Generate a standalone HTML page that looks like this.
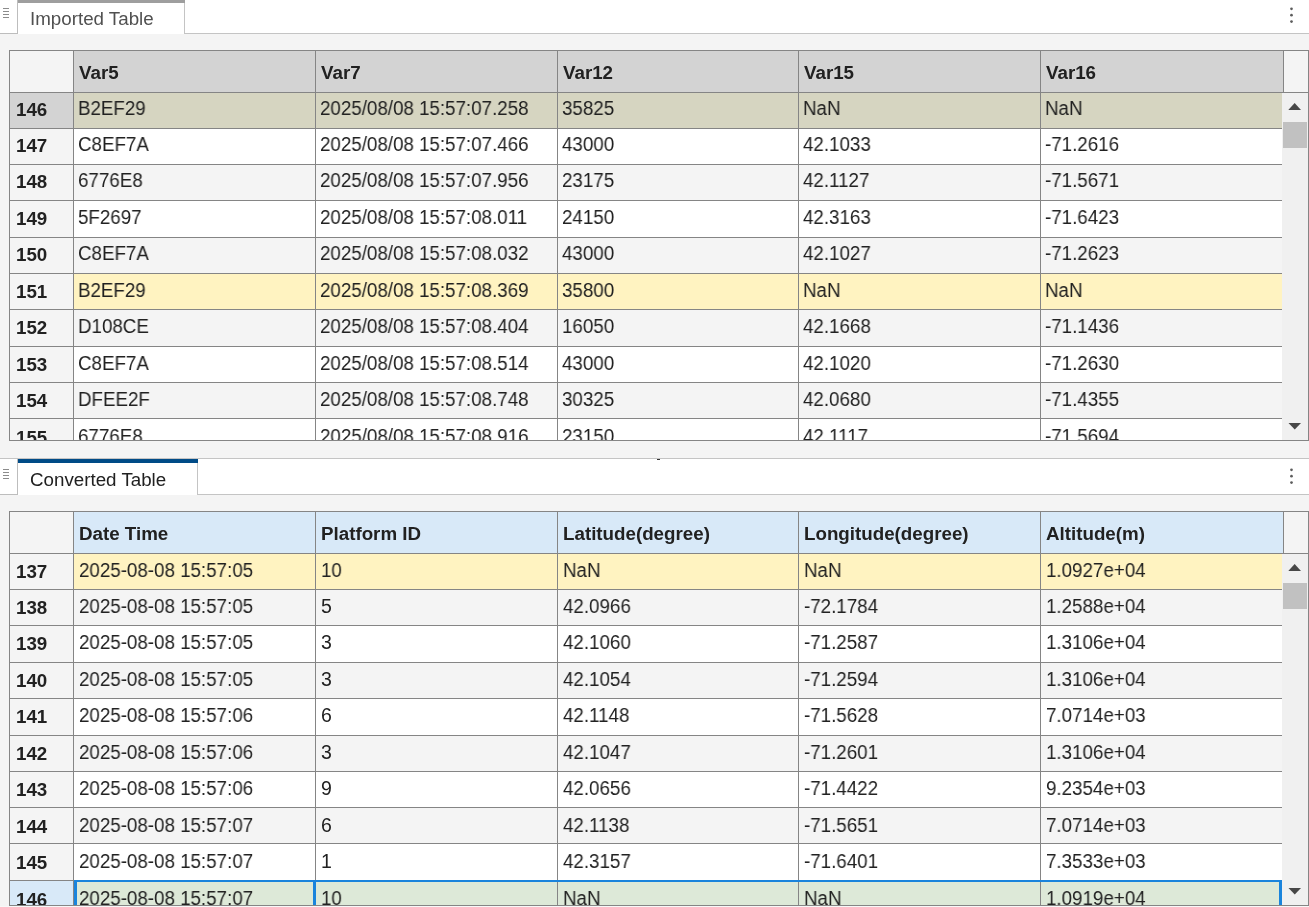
<!DOCTYPE html>
<html><head><meta charset="utf-8"><style>
html,body{margin:0;padding:0}
body{width:1309px;height:907px;overflow:hidden;position:relative;background:#f4f4f4;font-family:"Liberation Sans",sans-serif;font-size:18.75px;color:#212121}
body>div{position:absolute}
.t{position:absolute;line-height:21px;white-space:nowrap;will-change:transform}
.clip{overflow:hidden;will-change:transform}
.d{font-size:19.5px;transform:scaleX(0.9615);transform-origin:0 0}
.b{font-weight:bold}
.box{border:1px solid #858585;box-sizing:border-box;background:#f4f4f4}
.up{width:0;height:0;border-left:6.5px solid transparent;border-right:6.5px solid transparent;border-bottom:7px solid #474747}
.dn{width:0;height:0;border-left:6.5px solid transparent;border-right:6.5px solid transparent;border-top:7px solid #474747}
</style></head><body>
<div style="left:0px;top:-3px;width:1309px;height:37px;background:#fff;border-top:1px solid #c4c4c4;border-bottom:1px solid #c4c4c4;box-sizing:border-box"></div>
<div style="left:0px;top:-3px;width:18px;height:37px;background:#fff;border-top:1px solid #c4c4c4;border-right:1px solid #bdbdbd;border-bottom:1px solid #bdbdbd;box-sizing:border-box"></div>
<div style="left:3px;top:8px;width:6px;height:1px;background:#8c8c8c;"></div>
<div style="left:3px;top:11px;width:6px;height:1px;background:#8c8c8c;"></div>
<div style="left:3px;top:14px;width:6px;height:1px;background:#8c8c8c;"></div>
<div style="left:3px;top:17px;width:6px;height:1px;background:#8c8c8c;"></div>
<div style="left:18px;top:-2px;width:167px;height:36px;background:#fff;border-right:1px solid #c4c4c4;box-sizing:border-box"></div>
<div style="left:18px;top:-2px;width:167px;height:5px;background:#9e9e9e;"></div>
<div class="t " style="left:30.3px;top:8.00px;color:#505050">Imported Table</div>
<svg style="position:absolute;left:1285px;top:-3px" width="14" height="36"><g fill="#5c5c5c"><circle cx="6.5" cy="11.8" r="1.35"/><circle cx="6.5" cy="18.200000000000003" r="1.35"/><circle cx="6.5" cy="24.6" r="1.35"/></g></svg>
<div class="box" style="left:9px;top:50px;width:1300px;height:391px"></div>
<div style="left:10px;top:51px;width:63px;height:41px;background:#f4f4f4;"></div>
<div style="left:74px;top:51px;width:241px;height:41px;background:#d3d3d3;"></div>
<div style="left:316px;top:51px;width:241px;height:41px;background:#d3d3d3;"></div>
<div style="left:558px;top:51px;width:240px;height:41px;background:#d3d3d3;"></div>
<div style="left:799px;top:51px;width:241px;height:41px;background:#d3d3d3;"></div>
<div style="left:1041px;top:51px;width:242px;height:41px;background:#d3d3d3;"></div>
<div style="left:1284px;top:51px;width:24px;height:41px;background:#f4f4f4;"></div>
<div style="left:1282px;top:93px;width:26px;height:347px;background:#f0f0f0;"></div>
<div style="left:10px;top:93px;width:63px;height:35px;background:#d3d3d3;"></div>
<div style="left:74px;top:93px;width:1208px;height:35px;background:#d6d5c1;"></div>
<div style="left:10px;top:129px;width:63px;height:35px;background:#f4f4f4;"></div>
<div style="left:74px;top:129px;width:1208px;height:35px;background:#ffffff;"></div>
<div style="left:10px;top:165px;width:63px;height:35px;background:#f4f4f4;"></div>
<div style="left:74px;top:165px;width:1208px;height:35px;background:#f4f4f4;"></div>
<div style="left:10px;top:201px;width:63px;height:36px;background:#f4f4f4;"></div>
<div style="left:74px;top:201px;width:1208px;height:36px;background:#ffffff;"></div>
<div style="left:10px;top:238px;width:63px;height:35px;background:#f4f4f4;"></div>
<div style="left:74px;top:238px;width:1208px;height:35px;background:#f4f4f4;"></div>
<div style="left:10px;top:274px;width:63px;height:35px;background:#f4f4f4;"></div>
<div style="left:74px;top:274px;width:1208px;height:35px;background:#fff3c1;"></div>
<div style="left:10px;top:310px;width:63px;height:36px;background:#f4f4f4;"></div>
<div style="left:74px;top:310px;width:1208px;height:36px;background:#f4f4f4;"></div>
<div style="left:10px;top:347px;width:63px;height:35px;background:#f4f4f4;"></div>
<div style="left:74px;top:347px;width:1208px;height:35px;background:#ffffff;"></div>
<div style="left:10px;top:383px;width:63px;height:35px;background:#f4f4f4;"></div>
<div style="left:74px;top:383px;width:1208px;height:35px;background:#f4f4f4;"></div>
<div style="left:10px;top:419px;width:63px;height:21px;background:#f4f4f4;"></div>
<div style="left:74px;top:419px;width:1208px;height:21px;background:#ffffff;"></div>
<div style="left:10px;top:92px;width:1298px;height:1px;background:#858585;"></div>
<div style="left:10px;top:128px;width:1272px;height:1px;background:#858585;"></div>
<div style="left:10px;top:164px;width:1272px;height:1px;background:#858585;"></div>
<div style="left:10px;top:200px;width:1272px;height:1px;background:#858585;"></div>
<div style="left:10px;top:237px;width:1272px;height:1px;background:#858585;"></div>
<div style="left:10px;top:273px;width:1272px;height:1px;background:#858585;"></div>
<div style="left:10px;top:309px;width:1272px;height:1px;background:#858585;"></div>
<div style="left:10px;top:346px;width:1272px;height:1px;background:#858585;"></div>
<div style="left:10px;top:382px;width:1272px;height:1px;background:#858585;"></div>
<div style="left:10px;top:418px;width:1272px;height:1px;background:#858585;"></div>
<div style="left:73px;top:51px;width:1px;height:389px;background:#858585;"></div>
<div style="left:315px;top:51px;width:1px;height:389px;background:#858585;"></div>
<div style="left:557px;top:51px;width:1px;height:389px;background:#858585;"></div>
<div style="left:798px;top:51px;width:1px;height:389px;background:#858585;"></div>
<div style="left:1040px;top:51px;width:1px;height:389px;background:#858585;"></div>
<div style="left:1283px;top:51px;width:1px;height:42px;background:#858585;"></div>
<div class="t b" style="left:79.3px;top:62.00px">Var5</div>
<div class="t b" style="left:321.3px;top:62.00px">Var7</div>
<div class="t b" style="left:563.3px;top:62.00px">Var12</div>
<div class="t b" style="left:804.3px;top:62.00px">Var15</div>
<div class="t b" style="left:1046.3px;top:62.00px">Var16</div>
<div class="clip" style="left:0;top:93px;width:1282px;height:347px">
<div class="t b" style="left:16.3px;top:5.50px">146</div>
<div class="t d" style="left:78.1px;top:4.50px">B2EF29</div>
<div class="t d" style="left:320.1px;top:4.50px">2025/08/08 15:57:07.258</div>
<div class="t d" style="left:562.1px;top:4.50px">35825</div>
<div class="t d" style="left:803.1px;top:4.50px">NaN</div>
<div class="t d" style="left:1045.1px;top:4.50px">NaN</div>
<div class="t b" style="left:16.3px;top:41.97px">147</div>
<div class="t d" style="left:78.1px;top:40.97px">C8EF7A</div>
<div class="t d" style="left:320.1px;top:40.97px">2025/08/08 15:57:07.466</div>
<div class="t d" style="left:562.1px;top:40.97px">43000</div>
<div class="t d" style="left:803.1px;top:40.97px">42.1033</div>
<div class="t d" style="left:1045.1px;top:40.97px">-71.2616</div>
<div class="t b" style="left:16.3px;top:78.44px">148</div>
<div class="t d" style="left:78.1px;top:77.44px">6776E8</div>
<div class="t d" style="left:320.1px;top:77.44px">2025/08/08 15:57:07.956</div>
<div class="t d" style="left:562.1px;top:77.44px">23175</div>
<div class="t d" style="left:803.1px;top:77.44px">42.1127</div>
<div class="t d" style="left:1045.1px;top:77.44px">-71.5671</div>
<div class="t b" style="left:16.3px;top:114.91px">149</div>
<div class="t d" style="left:78.1px;top:113.91px">5F2697</div>
<div class="t d" style="left:320.1px;top:113.91px">2025/08/08 15:57:08.011</div>
<div class="t d" style="left:562.1px;top:113.91px">24150</div>
<div class="t d" style="left:803.1px;top:113.91px">42.3163</div>
<div class="t d" style="left:1045.1px;top:113.91px">-71.6423</div>
<div class="t b" style="left:16.3px;top:151.38px">150</div>
<div class="t d" style="left:78.1px;top:150.38px">C8EF7A</div>
<div class="t d" style="left:320.1px;top:150.38px">2025/08/08 15:57:08.032</div>
<div class="t d" style="left:562.1px;top:150.38px">43000</div>
<div class="t d" style="left:803.1px;top:150.38px">42.1027</div>
<div class="t d" style="left:1045.1px;top:150.38px">-71.2623</div>
<div class="t b" style="left:16.3px;top:187.85px">151</div>
<div class="t d" style="left:78.1px;top:186.85px">B2EF29</div>
<div class="t d" style="left:320.1px;top:186.85px">2025/08/08 15:57:08.369</div>
<div class="t d" style="left:562.1px;top:186.85px">35800</div>
<div class="t d" style="left:803.1px;top:186.85px">NaN</div>
<div class="t d" style="left:1045.1px;top:186.85px">NaN</div>
<div class="t b" style="left:16.3px;top:224.32px">152</div>
<div class="t d" style="left:78.1px;top:223.32px">D108CE</div>
<div class="t d" style="left:320.1px;top:223.32px">2025/08/08 15:57:08.404</div>
<div class="t d" style="left:562.1px;top:223.32px">16050</div>
<div class="t d" style="left:803.1px;top:223.32px">42.1668</div>
<div class="t d" style="left:1045.1px;top:223.32px">-71.1436</div>
<div class="t b" style="left:16.3px;top:260.79px">153</div>
<div class="t d" style="left:78.1px;top:259.79px">C8EF7A</div>
<div class="t d" style="left:320.1px;top:259.79px">2025/08/08 15:57:08.514</div>
<div class="t d" style="left:562.1px;top:259.79px">43000</div>
<div class="t d" style="left:803.1px;top:259.79px">42.1020</div>
<div class="t d" style="left:1045.1px;top:259.79px">-71.2630</div>
<div class="t b" style="left:16.3px;top:297.26px">154</div>
<div class="t d" style="left:78.1px;top:296.26px">DFEE2F</div>
<div class="t d" style="left:320.1px;top:296.26px">2025/08/08 15:57:08.748</div>
<div class="t d" style="left:562.1px;top:296.26px">30325</div>
<div class="t d" style="left:803.1px;top:296.26px">42.0680</div>
<div class="t d" style="left:1045.1px;top:296.26px">-71.4355</div>
<div class="t b" style="left:16.3px;top:333.73px">155</div>
<div class="t d" style="left:78.1px;top:332.73px">6776E8</div>
<div class="t d" style="left:320.1px;top:332.73px">2025/08/08 15:57:08.916</div>
<div class="t d" style="left:562.1px;top:332.73px">23150</div>
<div class="t d" style="left:803.1px;top:332.73px">42.1117</div>
<div class="t d" style="left:1045.1px;top:332.73px">-71.5694</div>
</div>
<svg style="position:absolute;left:1280px;top:92px" width="29" height="30"><polygon points="8.3,18 21,18 14.65,11" fill="#474747"/></svg>
<div style="left:1283px;top:122px;width:24px;height:26px;background:#c1c1c1;"></div>
<svg style="position:absolute;left:1280px;top:420px" width="29" height="20"><polygon points="8.5,3 21,3 14.75,9.5" fill="#474747"/></svg>
<div style="left:0px;top:458px;width:1309px;height:37px;background:#fff;border-top:1px solid #c4c4c4;border-bottom:1px solid #c4c4c4;box-sizing:border-box"></div>
<div style="left:0px;top:458px;width:18px;height:37px;background:#fff;border-top:1px solid #c4c4c4;border-right:1px solid #bdbdbd;border-bottom:1px solid #bdbdbd;box-sizing:border-box"></div>
<div style="left:3px;top:469px;width:6px;height:1px;background:#8c8c8c;"></div>
<div style="left:3px;top:472px;width:6px;height:1px;background:#8c8c8c;"></div>
<div style="left:3px;top:475px;width:6px;height:1px;background:#8c8c8c;"></div>
<div style="left:3px;top:478px;width:6px;height:1px;background:#8c8c8c;"></div>
<div style="left:18px;top:459px;width:180px;height:36px;background:#fff;border-right:1px solid #c4c4c4;box-sizing:border-box"></div>
<div style="left:18px;top:459px;width:180px;height:4px;background:#004b87;"></div>
<div class="t " style="left:30px;top:469.00px;color:#212121">Converted Table</div>
<svg style="position:absolute;left:1285px;top:458px" width="14" height="36"><g fill="#5c5c5c"><circle cx="6.5" cy="11.8" r="1.35"/><circle cx="6.5" cy="18.200000000000003" r="1.35"/><circle cx="6.5" cy="24.6" r="1.35"/></g></svg>
<div class="box" style="left:9px;top:511px;width:1300px;height:395px"></div>
<div style="left:10px;top:512px;width:63px;height:41px;background:#f4f4f4;"></div>
<div style="left:74px;top:512px;width:241px;height:41px;background:#d8e9f8;"></div>
<div style="left:316px;top:512px;width:241px;height:41px;background:#d8e9f8;"></div>
<div style="left:558px;top:512px;width:240px;height:41px;background:#d8e9f8;"></div>
<div style="left:799px;top:512px;width:241px;height:41px;background:#d8e9f8;"></div>
<div style="left:1041px;top:512px;width:242px;height:41px;background:#d8e9f8;"></div>
<div style="left:1284px;top:512px;width:24px;height:41px;background:#f4f4f4;"></div>
<div style="left:1282px;top:554px;width:26px;height:351px;background:#f0f0f0;"></div>
<div style="left:10px;top:554px;width:63px;height:35px;background:#f4f4f4;"></div>
<div style="left:74px;top:554px;width:1208px;height:35px;background:#fff3c1;"></div>
<div style="left:10px;top:590px;width:63px;height:35px;background:#f4f4f4;"></div>
<div style="left:74px;top:590px;width:1208px;height:35px;background:#f4f4f4;"></div>
<div style="left:10px;top:626px;width:63px;height:36px;background:#f4f4f4;"></div>
<div style="left:74px;top:626px;width:1208px;height:36px;background:#ffffff;"></div>
<div style="left:10px;top:663px;width:63px;height:35px;background:#f4f4f4;"></div>
<div style="left:74px;top:663px;width:1208px;height:35px;background:#f4f4f4;"></div>
<div style="left:10px;top:699px;width:63px;height:36px;background:#f4f4f4;"></div>
<div style="left:74px;top:699px;width:1208px;height:36px;background:#ffffff;"></div>
<div style="left:10px;top:736px;width:63px;height:35px;background:#f4f4f4;"></div>
<div style="left:74px;top:736px;width:1208px;height:35px;background:#f4f4f4;"></div>
<div style="left:10px;top:772px;width:63px;height:35px;background:#f4f4f4;"></div>
<div style="left:74px;top:772px;width:1208px;height:35px;background:#ffffff;"></div>
<div style="left:10px;top:808px;width:63px;height:35px;background:#f4f4f4;"></div>
<div style="left:74px;top:808px;width:1208px;height:35px;background:#f4f4f4;"></div>
<div style="left:10px;top:844px;width:63px;height:36px;background:#f4f4f4;"></div>
<div style="left:74px;top:844px;width:1208px;height:36px;background:#ffffff;"></div>
<div style="left:10px;top:881px;width:63px;height:24px;background:#d8e9f8;"></div>
<div style="left:74px;top:881px;width:1208px;height:24px;background:#dde9d8;"></div>
<div style="left:10px;top:553px;width:1298px;height:1px;background:#858585;"></div>
<div style="left:10px;top:589px;width:1272px;height:1px;background:#858585;"></div>
<div style="left:10px;top:625px;width:1272px;height:1px;background:#858585;"></div>
<div style="left:10px;top:662px;width:1272px;height:1px;background:#858585;"></div>
<div style="left:10px;top:698px;width:1272px;height:1px;background:#858585;"></div>
<div style="left:10px;top:735px;width:1272px;height:1px;background:#858585;"></div>
<div style="left:10px;top:771px;width:1272px;height:1px;background:#858585;"></div>
<div style="left:10px;top:807px;width:1272px;height:1px;background:#858585;"></div>
<div style="left:10px;top:843px;width:1272px;height:1px;background:#858585;"></div>
<div style="left:10px;top:880px;width:1272px;height:1px;background:#858585;"></div>
<div style="left:73px;top:512px;width:1px;height:393px;background:#858585;"></div>
<div style="left:315px;top:512px;width:1px;height:393px;background:#858585;"></div>
<div style="left:557px;top:512px;width:1px;height:393px;background:#858585;"></div>
<div style="left:798px;top:512px;width:1px;height:393px;background:#858585;"></div>
<div style="left:1040px;top:512px;width:1px;height:393px;background:#858585;"></div>
<div style="left:1283px;top:512px;width:1px;height:42px;background:#858585;"></div>
<div class="t b" style="left:79.3px;top:523.00px">Date Time</div>
<div class="t b" style="left:321.3px;top:523.00px">Platform ID</div>
<div class="t b" style="left:563.3px;top:523.00px">Latitude(degree)</div>
<div class="t b" style="left:804.3px;top:523.00px">Longitude(degree)</div>
<div class="t b" style="left:1046.3px;top:523.00px">Altitude(m)</div>
<div class="clip" style="left:0;top:554px;width:1282px;height:351px">
<div class="t b" style="left:16.3px;top:6.50px">137</div>
<div class="t d" style="left:78.7px;top:5.50px">2025-08-08 15:57:05</div>
<div class="t d" style="left:320.7px;top:5.50px">10</div>
<div class="t d" style="left:562.7px;top:5.50px">NaN</div>
<div class="t d" style="left:803.7px;top:5.50px">NaN</div>
<div class="t d" style="left:1045.7px;top:5.50px">1.0927e+04</div>
<div class="t b" style="left:16.3px;top:42.95px">138</div>
<div class="t d" style="left:78.7px;top:41.95px">2025-08-08 15:57:05</div>
<div class="t d" style="left:320.7px;top:41.95px">5</div>
<div class="t d" style="left:562.7px;top:41.95px">42.0966</div>
<div class="t d" style="left:803.7px;top:41.95px">-72.1784</div>
<div class="t d" style="left:1045.7px;top:41.95px">1.2588e+04</div>
<div class="t b" style="left:16.3px;top:79.40px">139</div>
<div class="t d" style="left:78.7px;top:78.40px">2025-08-08 15:57:05</div>
<div class="t d" style="left:320.7px;top:78.40px">3</div>
<div class="t d" style="left:562.7px;top:78.40px">42.1060</div>
<div class="t d" style="left:803.7px;top:78.40px">-71.2587</div>
<div class="t d" style="left:1045.7px;top:78.40px">1.3106e+04</div>
<div class="t b" style="left:16.3px;top:115.85px">140</div>
<div class="t d" style="left:78.7px;top:114.85px">2025-08-08 15:57:05</div>
<div class="t d" style="left:320.7px;top:114.85px">3</div>
<div class="t d" style="left:562.7px;top:114.85px">42.1054</div>
<div class="t d" style="left:803.7px;top:114.85px">-71.2594</div>
<div class="t d" style="left:1045.7px;top:114.85px">1.3106e+04</div>
<div class="t b" style="left:16.3px;top:152.30px">141</div>
<div class="t d" style="left:78.7px;top:151.30px">2025-08-08 15:57:06</div>
<div class="t d" style="left:320.7px;top:151.30px">6</div>
<div class="t d" style="left:562.7px;top:151.30px">42.1148</div>
<div class="t d" style="left:803.7px;top:151.30px">-71.5628</div>
<div class="t d" style="left:1045.7px;top:151.30px">7.0714e+03</div>
<div class="t b" style="left:16.3px;top:188.75px">142</div>
<div class="t d" style="left:78.7px;top:187.75px">2025-08-08 15:57:06</div>
<div class="t d" style="left:320.7px;top:187.75px">3</div>
<div class="t d" style="left:562.7px;top:187.75px">42.1047</div>
<div class="t d" style="left:803.7px;top:187.75px">-71.2601</div>
<div class="t d" style="left:1045.7px;top:187.75px">1.3106e+04</div>
<div class="t b" style="left:16.3px;top:225.20px">143</div>
<div class="t d" style="left:78.7px;top:224.20px">2025-08-08 15:57:06</div>
<div class="t d" style="left:320.7px;top:224.20px">9</div>
<div class="t d" style="left:562.7px;top:224.20px">42.0656</div>
<div class="t d" style="left:803.7px;top:224.20px">-71.4422</div>
<div class="t d" style="left:1045.7px;top:224.20px">9.2354e+03</div>
<div class="t b" style="left:16.3px;top:261.65px">144</div>
<div class="t d" style="left:78.7px;top:260.65px">2025-08-08 15:57:07</div>
<div class="t d" style="left:320.7px;top:260.65px">6</div>
<div class="t d" style="left:562.7px;top:260.65px">42.1138</div>
<div class="t d" style="left:803.7px;top:260.65px">-71.5651</div>
<div class="t d" style="left:1045.7px;top:260.65px">7.0714e+03</div>
<div class="t b" style="left:16.3px;top:298.10px">145</div>
<div class="t d" style="left:78.7px;top:297.10px">2025-08-08 15:57:07</div>
<div class="t d" style="left:320.7px;top:297.10px">1</div>
<div class="t d" style="left:562.7px;top:297.10px">42.3157</div>
<div class="t d" style="left:803.7px;top:297.10px">-71.6401</div>
<div class="t d" style="left:1045.7px;top:297.10px">7.3533e+03</div>
<div class="t b" style="left:16.3px;top:334.55px">146</div>
<div class="t d" style="left:78.7px;top:333.55px">2025-08-08 15:57:07</div>
<div class="t d" style="left:320.7px;top:333.55px">10</div>
<div class="t d" style="left:562.7px;top:333.55px">NaN</div>
<div class="t d" style="left:803.7px;top:333.55px">NaN</div>
<div class="t d" style="left:1045.7px;top:333.55px">1.0919e+04</div>
</div>
<svg style="position:absolute;left:1280px;top:553px" width="29" height="30"><polygon points="8.3,18 21,18 14.65,11" fill="#474747"/></svg>
<div style="left:1283px;top:583px;width:24px;height:26px;background:#c1c1c1;"></div>
<svg style="position:absolute;left:1280px;top:885px" width="29" height="20"><polygon points="8.5,3 21,3 14.75,9.5" fill="#474747"/></svg>
<div style="left:657px;top:459px;width:3px;height:1px;background:#333;"></div>
<div style="left:74px;top:880px;width:1208px;height:2px;background:#1a84dc;"></div>
<div style="left:74px;top:880px;width:3px;height:25px;background:#1a84dc;"></div>
<div style="left:313px;top:880px;width:3px;height:25px;background:#1a84dc;"></div>
<div style="left:1279px;top:880px;width:3px;height:25px;background:#1a84dc;"></div>
<div style="left:0px;top:906px;width:1309px;height:1px;background:#f8f8f8;"></div>
</body></html>
